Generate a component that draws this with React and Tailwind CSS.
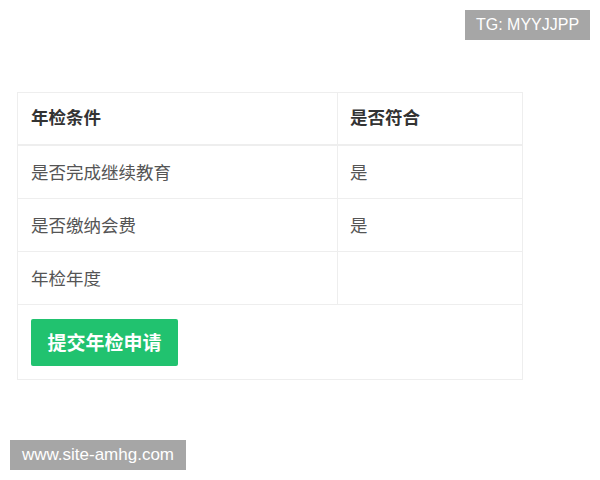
export default function App() {
  const font = { fontFamily: '"Noto Sans CJK SC", "Noto Sans", sans-serif' };
  return (
    <div className="relative w-[600px] h-[480px] bg-white" style={font}>
      <div className="absolute right-[10px] top-[10px] w-[125px] h-[30px] bg-[#a6a6a6] text-white text-[16px] flex items-center justify-center" style={{ fontFamily: '"Liberation Sans", Arial, sans-serif' }}>TG: MYYJJPP</div>
      <div className="pt-[92px] pl-[17px]">
        <div className="w-[506px] border border-[#eeeeee]">
          <div className="flex h-[53px] border-b-2 border-[#eeeeee] text-[17.5px] font-bold text-[#333]">
            <div className="w-[320px] border-r border-[#eeeeee] flex items-center pl-[13px] pb-[2px]">年检条件</div>
            <div className="flex-1 flex items-center pl-[12px] pb-[2px]">是否符合</div>
          </div>
          {[["是否完成继续教育", "是"], ["是否缴纳会费", "是"], ["年检年度", ""]].map(([a, b], i) => (
            <div key={i} className="flex h-[53px] border-b border-[#eeeeee] text-[17.5px] text-[#555]">
              <div className="w-[320px] border-r border-[#eeeeee] flex items-center pl-[13px]">{a}</div>
              <div className="flex-1 flex items-center pl-[12px]">{b}</div>
            </div>
          ))}
          <div className="h-[74px] flex items-center pl-[13px]">
            <button className="w-[147px] h-[47px] bg-[#21c26f] rounded-[2px] text-white text-[19px] font-bold">提交年检申请</button>
          </div>
        </div>
      </div>
      <div className="absolute left-[10px] top-[440px] w-[176px] h-[30px] bg-[#a6a6a6] text-white text-[17px] flex items-center justify-center" style={{ fontFamily: '"Liberation Sans", Arial, sans-serif' }}>www.site-amhg.com</div>
    </div>
  );
}
